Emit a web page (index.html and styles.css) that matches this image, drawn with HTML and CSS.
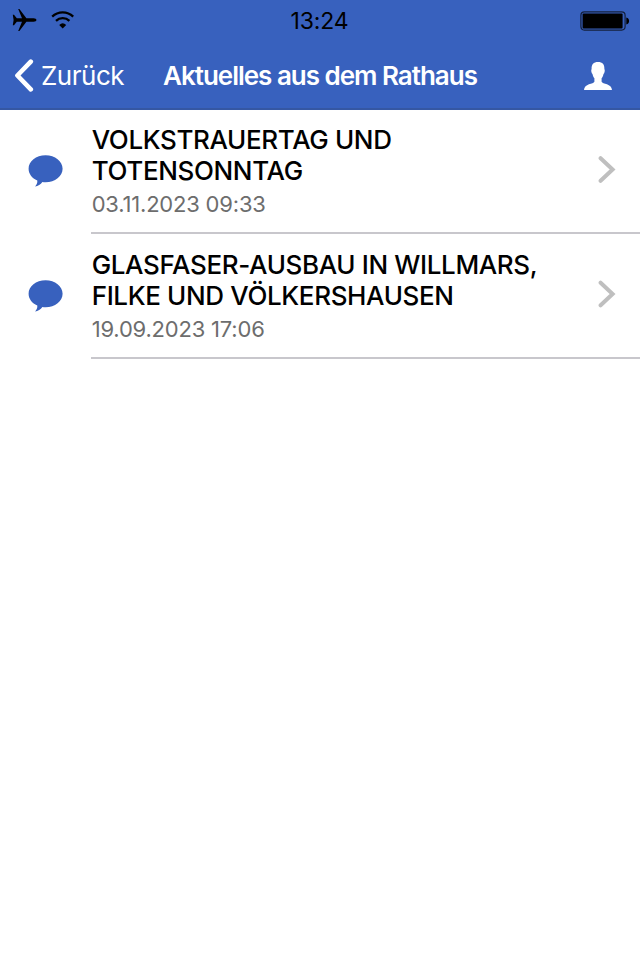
FILE: index.html
```html
<!DOCTYPE html>
<html lang="de">
<head>
    <meta charset="UTF-8">
    <meta name="viewport" content="width=device-width, initial-scale=1.0">
    <title>Aktuelles aus dem Rathaus</title>
    <link rel="stylesheet" href="styles.css">
</head>
<body>
    <header class="header">
        <div class="status-bar">
            <div class="status-left">
                <svg class="plane" width="25" height="24" viewBox="0 0 25 24">
                    <path d="M0.8 6.8H2L4.8 10.3H10L6.2 1H7.4L14.4 10.3H21.5C23.4 10.3 24.4 11.1 24.4 12S23.4 13.7 21.5 13.7H14.4L7.4 23H6.2L10 13.7H4.8L2 17.2H0.8L1.6 12Z"/>
                </svg>
                <svg class="wifi" width="24" height="18" viewBox="0 0 24 18">
                    <path d="M1.2 5.6A15.2 15.2 0 0 1 22.2 5.6M5 9.9A9.6 9.6 0 0 1 18.4 9.9" fill="none" stroke="#000" stroke-width="2.3"/>
                    <path d="M11.7 17.4L8.2 13.9A5.2 5.2 0 0 1 15.2 13.9Z"/>
                </svg>
            </div>
            <span class="clock">13:24</span>
            <div class="status-right">
                <svg class="battery" width="50" height="20" viewBox="0 0 50 20">
                    <rect x="0.9" y="0.9" width="44.2" height="18.2" rx="3.5" fill="none" stroke="#14203d" stroke-width="1.2"/>
                    <rect x="2.6" y="2.6" width="40" height="14.8" rx="1"/>
                    <path d="M46.3 6.5C50 7 50 13 46.3 13.5Z"/>
                </svg>
            </div>
        </div>
        <nav class="nav-bar">
            <a class="back" href="#">
                <svg width="20" height="34" viewBox="0 0 20 34">
                    <path d="M16.8 2.6L3.4 16.5L16.8 30.4" fill="none" stroke="#fff" stroke-width="4.6" stroke-linecap="round" stroke-linejoin="round"/>
                </svg>
                <span class="back-label">Zurück</span>
            </a>
            <h1 class="nav-title">Aktuelles aus dem Rathaus</h1>
            <a class="profile" href="#" aria-label="Profil">
                <svg width="28" height="29" viewBox="0 0 28 29">
                    <path d="M14 0C18.5 0 20.6 2.5 20.4 7C21.3 8.5 20.4 11.3 19.5 12.1C19.2 14 18.4 15.3 17.6 16.3V19.7C18.4 22.2 27.8 21.3 28 28.1H0C0.2 21.3 9.6 22.2 10.4 19.7V16.3C9.6 15.3 8.8 14 8.5 12.1C7.6 11.3 6.7 8.5 7.6 7C7.4 2.5 9.5 0 14 0Z" fill="#fff"/>
                </svg>
            </a>
        </nav>
    </header>

    <main class="news-list">
        <a class="news-item" href="#">
            <div class="news-icon">
                <svg width="35" height="32" viewBox="0 0 35 32">
                    <path d="M17.6 0.2C27 0.2 34.6 6.2 34.6 13.7S27 27.2 17.6 27.2C16.2 27.2 15.4 27.1 14.4 27C12.6 29.3 10 31.4 7 31.6C8.6 30 9.6 27.8 9.3 25.5C4 23.2 0.6 18.8 0.6 13.7C0.6 6.2 8 0.2 17.6 0.2Z" fill="#3861be"/>
                </svg>
            </div>
            <div class="news-content">
                <div class="news-text">
                    <h2 class="news-title">VOLKSTRAUERTAG UND<br>TOTENSONNTAG</h2>
                    <p class="news-date">03.11.2023 09:33</p>
                </div>
                <svg class="chevron" width="18" height="28" viewBox="0 0 18 28">
                    <path d="M2.6 2.2L14.6 13.5L2.6 24.8" fill="none" stroke="#bfbfbf" stroke-width="4" stroke-linecap="round"/>
                </svg>
            </div>
        </a>
        <a class="news-item" href="#">
            <div class="news-icon">
                <svg width="35" height="32" viewBox="0 0 35 32">
                    <path d="M17.6 0.2C27 0.2 34.6 6.2 34.6 13.7S27 27.2 17.6 27.2C16.2 27.2 15.4 27.1 14.4 27C12.6 29.3 10 31.4 7 31.6C8.6 30 9.6 27.8 9.3 25.5C4 23.2 0.6 18.8 0.6 13.7C0.6 6.2 8 0.2 17.6 0.2Z" fill="#3861be"/>
                </svg>
            </div>
            <div class="news-content">
                <div class="news-text">
                    <h2 class="news-title">GLASFASER-AUSBAU IN WILLMARS,<br>FILKE UND VÖLKERSHAUSEN</h2>
                    <p class="news-date">19.09.2023 17:06</p>
                </div>
                <svg class="chevron" width="18" height="28" viewBox="0 0 18 28">
                    <path d="M2.6 2.7L14.6 14L2.6 25.3" fill="none" stroke="#bfbfbf" stroke-width="4" stroke-linecap="round"/>
                </svg>
            </div>
        </a>
    </main>
</body>
</html>
```
FILE: styles.css
```css
* {
    box-sizing: border-box;
}

body {
    margin: 0;
    min-height: 100vh;
    background-color: #fff;
    color: #000;
    font-family: Inter, "Liberation Sans", sans-serif;
}

a {
    color: inherit;
    text-decoration: none;
}

svg {
    display: block;
    flex-shrink: 0;
}

/* Kopfbereich */
.header {
    height: 110px;
    background-color: #3861be;
    border-bottom: 2px solid #3557a3;
}

.status-bar {
    display: grid;
    grid-template-columns: 1fr auto 1fr;
    align-items: center;
    height: 40px;
    padding: 0 10px 0 12px;
}

.status-left {
    display: flex;
    align-items: center;
    gap: 14px;
}

.status-right {
    display: flex;
    justify-content: flex-end;
}

.battery {
    margin-top: 2px;
}

.clock {
    margin-right: 3px;
    padding-top: 2px;
    font-size: 23px;
    line-height: 38px;
    letter-spacing: -0.1px;
}

.nav-bar {
    display: grid;
    grid-template-columns: 140px 1fr 140px;
    align-items: center;
    height: 70px;
    padding-top: 2px;
    color: #fff;
}

.back {
    display: flex;
    align-items: center;
    gap: 7px;
    padding-left: 14px;
}

.back-label {
    font-size: 26px;
    line-height: 32px;
    letter-spacing: -0.5px;
}

.nav-title {
    margin: 0;
    font-size: 26px;
    font-weight: 600;
    line-height: 32px;
    letter-spacing: -1.02px;
    text-align: center;
    white-space: nowrap;
}

.profile {
    display: flex;
    justify-content: flex-end;
    padding-right: 28px;
}

/* Liste der Meldungen */
.news-item {
    display: flex;
    height: 125px;
}

.news-item:first-child {
    height: 124px;
}

.news-icon {
    display: flex;
    align-items: center;
    width: 91px;
    padding: 0 0 2px 28px;
}

.news-content {
    display: flex;
    flex: 1;
    align-items: center;
    justify-content: space-between;
    padding-right: 24px;
    border-bottom: 2px solid #c8c7cc;
}

.news-text {
    padding-left: 0.7px;
}

.news-title {
    margin: 0;
    font-size: 26px;
    font-weight: 480;
    line-height: 31px;
    letter-spacing: -0.36px;
    white-space: nowrap;
}

.news-date {
    margin: 4px 0 0;
    color: #6d6d6d;
    font-size: 22px;
    line-height: 28px;
    letter-spacing: -0.2px;
}

.chevron {
    margin-bottom: 3px;
}
```
